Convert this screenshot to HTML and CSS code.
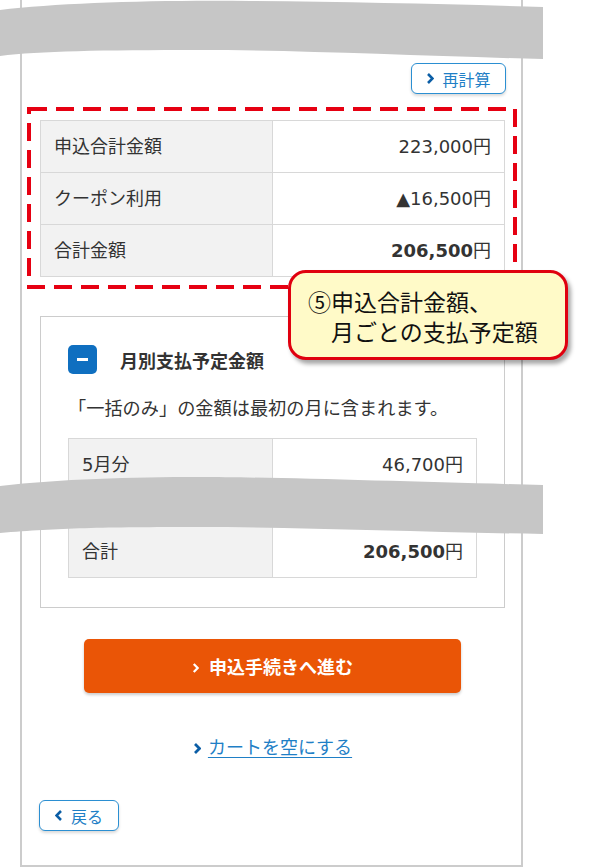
FILE: index.html
```html
<!doctype html>
<html lang="ja">
<head>
<meta charset="utf-8">
<title>カート 合計金額</title>
<link rel="stylesheet" href="styles.css">
</head>
<body>
<div class="page">
	<div class="frame">
		<div class="recalc-row">
			<a class="btn-line recalc" href="#"><svg class="chev" viewBox="0 0 8 12"><path d="M2 1.5 6.5 6 2 10.5"/></svg>再計算</a>
		</div>

		<table class="price-table">
			<tr><th>申込合計金額</th><td>223,000円</td></tr>
			<tr><th>クーポン利用</th><td>▲16,500円</td></tr>
			<tr><th>合計金額</th><td><b>206,500</b>円</td></tr>
		</table>

		<section class="monthly">
			<h2 class="monthly-head"><span class="toggle"></span>月別支払予定金額</h2>
			<p class="note">「一括のみ」の金額は最初の月に含まれます。</p>
			<table class="price-table month-table">
				<tr><th>5月分</th><td>46,700円</td></tr>
				<tr class="cut"><th></th><td></td></tr>
				<tr><th>合計</th><td><b>206,500</b>円</td></tr>
			</table>
		</section>

		<div class="actions">
			<a class="btn-go" href="#"><svg class="chev" viewBox="0 0 8 12"><path d="M2 1.5 6.5 6 2 10.5"/></svg>申込手続きへ進む</a>
			<a class="link-clear" href="#"><svg class="chev" viewBox="0 0 8 12"><path d="M2 1.5 6.5 6 2 10.5"/></svg><span>カートを空にする</span></a>
		</div>

		<a class="btn-line back" href="#"><svg class="chev" viewBox="0 0 8 12"><path d="M6 1.5 1.5 6 6 10.5"/></svg>戻る</a>
	</div>

	<!-- 省略の波線 -->
	<svg class="wave wave-top" viewBox="0 0 590 70"><path d="M0 10C60 3 150 0 250 1S450 4 543 7L543 59C420 56 300 50 200 50S40 51 0 56Z"/></svg>
	<svg class="wave wave-mid" viewBox="0 0 590 70"><path d="M0 16C60 9 130 7 200 7S420 12 543 15L543 64C420 62 300 57 200 57S60 58 0 63Z"/></svg>

	<!-- 注釈 -->
	<svg class="focus-box" viewBox="0 0 490 182"><rect x="2" y="2" width="486" height="178"/></svg>
	<div class="callout">⑤申込合計金額、<br>　月ごとの支払予定額</div>
</div>
</body>
</html>
```

FILE: styles.css
```css
*{ margin:0; padding:0; box-sizing:border-box; }
body{ background:#fff; color:#333; font-family:"DejaVu Sans","Noto Sans CJK JP",sans-serif; font-size:18px; }
a{ text-decoration:none; }

.page{ position:relative; width:590px; height:868px; overflow:hidden; }
.frame{ margin-left:20px; width:503px; height:867px; border:2px solid #ccc; border-top:0; padding:63px 16px 0 18px; }

.chev{ width:8px; height:12px; flex:none; }
.chev path{ fill:none; stroke:currentColor; stroke-width:2.6; }

/* 枠線ボタン */
.btn-line{ display:flex; align-items:center; justify-content:center; gap:8px; height:31px; border:1.5px solid #2b8fd2; border-radius:6px; background:#fff; color:#1f7fc6; font-size:16px; font-family:"Noto Sans CJK JP",sans-serif; box-shadow:0 2px 3px rgba(0,0,0,.15); }
.btn-line .chev{ color:#0b5ea6; width:8px; height:13px; }
.recalc-row{ display:flex; justify-content:flex-end; margin-right:-1px; }
.recalc{ width:95px; }
.back{ width:80px; margin-top:41px; margin-left:-1px; }

/* 金額テーブル */
.price-table{ width:100%; border-collapse:collapse; margin-top:26px; }
.price-table tr{ height:52px; }
.price-table th,.price-table td{ border:1px solid #d8d8d8; padding:0 13px; font-weight:normal; line-height:26px; }
.price-table th{ width:50%; background:#f2f2f2; text-align:left; }
.price-table td{ text-align:right; }
.price-table b{ font-weight:bold; }
.price-table .cut{ height:35px; }

/* 月別 */
.monthly{ margin-top:39px; border:1px solid #ccc; padding:28px 27px 29px; }
.monthly-head{ display:flex; align-items:center; gap:23px; height:29px; font-size:18px; font-weight:bold; color:#333; font-family:"Noto Sans CJK JP",sans-serif; }
.toggle{ width:29px; height:29px; border-radius:5px; background:#0f6fc0; display:flex; align-items:center; justify-content:center; }
.toggle::before{ content:""; width:11px; height:3px; background:#fff; }
.note{ margin-top:20px; line-height:26px; font-family:"Noto Sans CJK JP",sans-serif; font-size:18.2px; white-space:nowrap; }
.month-table{ margin-top:18px; }

/* 進む */
.actions{ display:flex; flex-direction:column; align-items:center; }
.btn-go{ margin-top:31px; width:377px; height:54px; border-radius:5px; background:#ea5506; color:#fff; display:flex; align-items:center; justify-content:center; gap:10px; font-weight:bold; font-family:"Noto Sans CJK JP",sans-serif; box-shadow:0 2px 3px rgba(0,0,0,.2); }
.btn-go .chev{ width:7px; height:12px; margin-top:3px; }
.link-clear{ margin-top:40px; display:flex; align-items:center; gap:7px; line-height:26px; color:#1f7fc6; font-family:"Noto Sans CJK JP",sans-serif; }
.link-clear span{ text-decoration:underline; text-underline-offset:3px; }
.link-clear .chev{ color:#0b5ea6; width:8px; height:13px; margin-top:4px; }
.link-clear .chev path{ stroke-width:2.8; }

/* 波線・注釈 */
.wave{ position:absolute; left:0; width:590px; height:70px; }
.wave path{ fill:#c6c6c6; }
.wave-top{ top:0; }
.wave-mid{ top:470px; }
.focus-box{ position:absolute; left:27px; top:107px; width:490px; height:182px; }
.focus-box rect{ fill:none; stroke:#e60012; stroke-width:4; stroke-dasharray:18 9; }
.callout{ position:absolute; left:288px; top:270px; width:280px; height:90px; padding:13px 0 0 17px; border:3px solid #e0000f; border-radius:18px; background:#fffac8; box-shadow:3px 4px 4px rgba(0,0,0,.35); font-family:"Noto Sans CJK JP",sans-serif; font-size:23px; line-height:30px; color:#111; }
```
